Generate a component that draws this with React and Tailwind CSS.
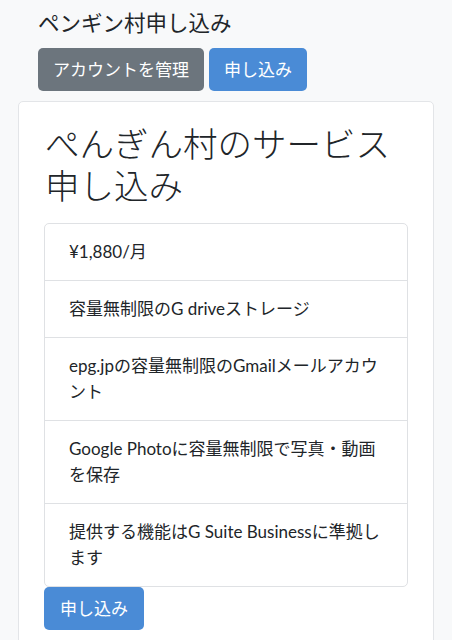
const items = [
  '¥1,880/月',
  '容量無制限のG driveストレージ',
  'epg.jpの容量無制限のGmailメールアカウント',
  'Google Photoに容量無制限で写真・動画を保存',
  '提供する機能はG Suite Businessに準拠します',
];

export default function App() {
  return (
    <div className="min-h-screen bg-[#f8f9fa] text-[#212529] font-['Lato','Noto_Sans_CJK_JP',sans-serif]">
      <div className="px-[38px] pt-[9px]">
        <h1 className="text-[21.5px] leading-[29px]">ペンギン村申し込み</h1>
        <div className="mt-[10px] flex gap-[5px]">
          <button className="h-[43px] rounded-[5px] bg-[#6c757d] px-[15px] text-[17px] text-white">
            アカウントを管理
          </button>
          <button className="h-[43px] rounded-[5px] bg-[#4a8bd6] px-[15px] text-[17px] text-white">
            申し込み
          </button>
        </div>
      </div>
      <div className="mx-[18px] mt-[10px] rounded-[5px] border border-[#e3e5e8] bg-white px-[25px] pt-[21px] pb-[20px]">
        <h2 className="pl-[1px] text-[34.5px] leading-[42px] font-light">ぺんぎん村のサービス申し込み</h2>
        <ul className="mt-[16px] rounded-[5px] border border-[#dfe1e4]">
          {items.map((t, i) => (
            <li
              key={i}
              className={`px-[24px] py-[15px] text-[17px] leading-[26px] ${i > 0 ? 'border-t border-[#dfe1e4]' : ''}`}
            >
              {t}
            </li>
          ))}
        </ul>
        <button className="mt-0 h-[43px] rounded-[5px] bg-[#4a8bd6] px-[16px] text-[17px] text-white">
          申し込み
        </button>
      </div>
    </div>
  );
}
